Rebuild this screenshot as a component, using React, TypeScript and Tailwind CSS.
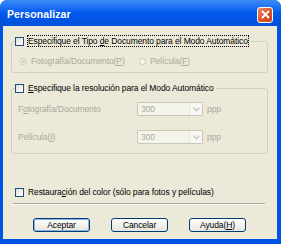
import React from "react";

const font = { fontFamily: '"Liberation Sans", Arial, sans-serif' };

function Check() {
  return (
    <span className="inline-block w-[9px] h-[9px] shrink-0 border border-[#1C5180] bg-gradient-to-br from-[#DCDCD7] to-white" />
  );
}

function Radio({ checked }: { checked?: boolean }) {
  return (
    <span className="inline-flex w-[7px] h-[7px] shrink-0 rounded-full border border-[#CAC8BB] bg-[#F5F4EA] items-center justify-center">
      {checked && <span className="block w-[3px] h-[3px] rounded-full bg-[#CAC8BB]" />}
    </span>
  );
}

function Combo() {
  return (
    <div className="flex w-[66px] h-[14px] border border-[#C9C7BA] bg-[#F5F4EA] rounded-[1px]">
      <div className="flex-1 flex items-center pl-[3px] text-[#ACA899] text-[8.5px]">300</div>
      <div className="w-[13px] flex items-center justify-center bg-[#F7F7F4] border-l border-[#E6E5DC]">
        <svg width="7" height="5" viewBox="0 0 7 5">
          <path d="M0.5 0.8 L3.5 3.8 L6.5 0.8" fill="none" stroke="#C9C7BA" strokeWidth="1.4" />
        </svg>
      </div>
    </div>
  );
}

function Btn({ children, def }: { children: React.ReactNode; def?: boolean }) {
  return (
    <div className="w-[57px] h-[14px] rounded-[3px] border border-[#003C74] bg-gradient-to-b from-white to-[#E6E5DE] flex items-center justify-center text-black">
      {def ? (
        <div className="w-full h-full rounded-[2px] border border-[#8DB2E3] flex items-center justify-center">{children}</div>
      ) : (
        children
      )}
    </div>
  );
}

export default function App() {
  return (
    <div className="w-[281px] h-[244px] bg-white" style={font}>
      <div className="w-[281px] h-[244px] flex flex-col rounded-t-[7px] overflow-hidden bg-[#0054E3]">
        {/* title bar */}
        <div className="h-[26px] shrink-0 flex items-center pl-[7px] pr-[8px] pt-[3px] bg-gradient-to-b from-[#3B8CF7] via-[#0058EE] to-[#0250D8]">
          <span className="flex-1 text-white font-bold text-[10.5px] tracking-[0.1px]">Personalizar</span>
          <div className="w-[16px] h-[16px] rounded-[3px] border border-white bg-gradient-to-br from-[#E88A6A] via-[#E0552D] to-[#C8401C] flex items-center justify-center">
            <svg width="9" height="9" viewBox="0 0 9 9">
              <path d="M1 1 L8 8 M8 1 L1 8" stroke="white" strokeWidth="1.8" />
            </svg>
          </div>
        </div>
        {/* body */}
        <div className="flex-1 ml-[3px] mr-[4px] mb-[5px] bg-[#ECE9D8] flex flex-col text-[8.5px] tracking-[-0.1px] leading-[10px] text-black whitespace-nowrap">
          <fieldset className="mt-[9px] ml-[8px] w-[257px] border border-[#D0D0BF] rounded-[3px] pl-[8px] pt-[9px] pb-[6px]">
            <legend className="ml-[-5px] pr-[2px] flex items-center h-[12px] gap-[3px]">
              <Check />
              <span className="border border-dotted border-black px-[0px] leading-[10px]">
                Especifique el Tipo <span className="underline">d</span>e Documento para el Modo Automático
              </span>
            </legend>
            <div className="flex items-center h-[10px] text-[#ACA899]">
              <Radio checked />
              <span className="ml-[4px] w-[108px]">
                Fotografía/Documento(<span className="underline">P</span>)
              </span>
              <Radio />
              <span className="ml-[4px]">
                Película(<span className="underline">F</span>)
              </span>
            </div>
          </fieldset>

          <fieldset className="mt-[9px] ml-[8px] w-[257px] border border-[#D0D0BF] rounded-[3px] pl-[6px] pt-[8px] pb-[9px]">
            <legend className="ml-[-3px] pr-[2px] flex items-center h-[12px] gap-[3px]">
              <Check />
              <span className="pl-[1px]">
                <span className="underline">E</span>specifique la resolución para el Modo Automático
              </span>
            </legend>
            <div className="flex items-center h-[14px] text-[#ACA899]">
              <span className="w-[119px]">
                F<span className="underline">o</span>tografía/Documento
              </span>
              <Combo />
              <span className="ml-[4px]">ppp</span>
            </div>
            <div className="flex items-center h-[14px] mt-[14px] text-[#ACA899]">
              <span className="w-[119px]">
                Película(<span className="underline">I</span>)
              </span>
              <Combo />
              <span className="ml-[4px]">ppp</span>
            </div>
          </fieldset>

          <div className="mt-[32px] ml-[12px] flex items-center h-[12px] gap-[4px]">
            <Check />
            <span>
              Restaura<span className="underline">c</span>ión del color (sólo para fotos y películas)
            </span>
          </div>

          <div className="mt-[5px] ml-[10px] mr-[12px] h-[2px] border-t border-[#ACA899] border-b border-b-white" />

          <div className="mt-[13px] ml-[30px] flex gap-[21px]">
            <Btn def>Aceptar</Btn>
            <Btn>Cancelar</Btn>
            <Btn>
              <span>
                Ayuda(<span className="underline">H</span>)
              </span>
            </Btn>
          </div>
        </div>
      </div>
    </div>
  );
}
